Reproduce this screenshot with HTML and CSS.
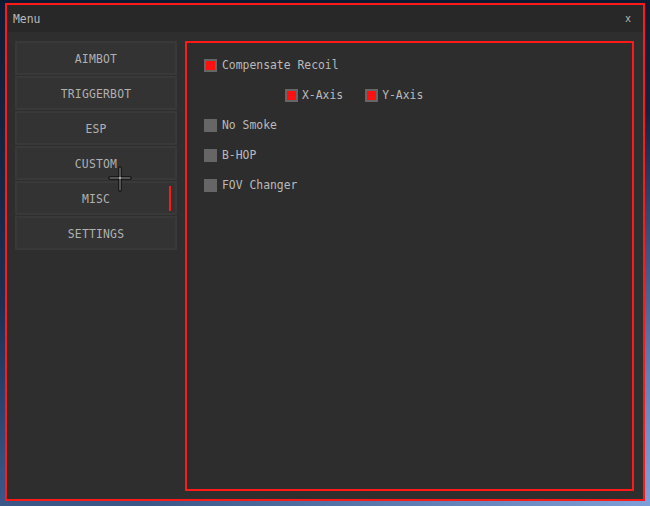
FILE: index.html
```html
<!DOCTYPE html>
<html lang="en">
<head>
  <meta charset="UTF-8" />
  <title>Menu</title>
  <link rel="stylesheet" href="styles.css">
</head>
<body>

  <div class="window">
    <div class="title-bar">
      <span class="title">Menu</span>
      <span class="close">x</span>
    </div>

    <div class="content">
      <div class="nav">
        <div class="nav-btn">AIMBOT</div>
        <div class="nav-btn">TRIGGERBOT</div>
        <div class="nav-btn">ESP</div>
        <div class="nav-btn">CUSTOM</div>
        <div class="nav-btn active">MISC</div>
        <div class="nav-btn">SETTINGS</div>
      </div>

      <div class="panel">
        <div class="row">
          <span class="check on"></span>
          <span class="label">Compensate Recoil</span>
        </div>
        <div class="row sub">
          <span class="check on"></span>
          <span class="label">X-Axis</span>
          <span class="check on"></span>
          <span class="label">Y-Axis</span>
        </div>
        <div class="row">
          <span class="check"></span>
          <span class="label">No Smoke</span>
        </div>
        <div class="row">
          <span class="check"></span>
          <span class="label">B-HOP</span>
        </div>
        <div class="row">
          <span class="check"></span>
          <span class="label">FOV Changer</span>
        </div>
      </div>
    </div>
  </div>

  <svg class="cursor" width="24" height="26" viewBox="0 0 24 26">
    <path d="M11 1h2v10h10v2H13v12h-2V13H1v-2h10z" fill="#a8a8a8" stroke="#000" stroke-width="1"/>
  </svg>

</body>
</html>
```

FILE: styles.css
```css
body {
  margin: 0;
  width: 650px;
  height: 506px;
  overflow: hidden;
  font-family: "DejaVu Sans Mono", "Liberation Mono", monospace;
  font-size: 11.4px;
  color: #bababa;
  background:
    radial-gradient(ellipse at 100% 100%, #7f9fd8 0%, rgba(127, 159, 216, 0) 55%),
    linear-gradient(to bottom, #101a32 0%, #1d2e52 60%, #3c5889 100%);
}

.window {
  box-sizing: border-box;
  width: 640px;
  height: 498px;
  margin: 3px 0 0 5px;
  border: 2px solid #ff1a1a;
  background-color: #2e2e2e;
  display: flex;
  flex-direction: column;
}

.title-bar {
  height: 27px;
  background-color: #282828;
  display: flex;
  align-items: center;
  justify-content: space-between;
  padding: 0 12px 0 6px;
}

.close {
  font-size: 10px;
}

.content {
  flex: 1;
  display: flex;
  gap: 8px;
  padding: 9px 9px 8px 8px;
}

.nav {
  width: 162px;
  display: flex;
  flex-direction: column;
  gap: 1px;
}

.nav-btn {
  box-sizing: border-box;
  height: 34px;
  padding-top: 2px;
  background-color: #333;
  border: 2px solid #393939;
  display: flex;
  align-items: center;
  justify-content: center;
  position: relative;
  color: #b0b0b0;
  letter-spacing: 0.2px;
}

.nav-btn.active::after {
  content: "";
  position: absolute;
  right: 4px;
  top: 3px;
  width: 2px;
  height: 25px;
  background-color: #ff1a1a;
}

.panel {
  box-sizing: border-box;
  flex: 1;
  border: 2px solid #ff1a1a;
  background-color: #2d2d2d;
  padding: 7px 0 0 17px;
}

.row {
  height: 30px;
  display: flex;
  align-items: center;
}

.row.sub {
  padding-left: 81px;
}

.check {
  box-sizing: border-box;
  width: 13px;
  height: 13px;
  background-color: #666;
  margin-right: 5px;
}

.check.on {
  border: 2px solid #666;
  background-color: #ff1010;
}

.row.sub .check {
  margin-right: 4px;
}

.row.sub .label {
  margin-right: 22px;
}

.cursor {
  position: absolute;
  left: 108px;
  top: 166px;
}
```
